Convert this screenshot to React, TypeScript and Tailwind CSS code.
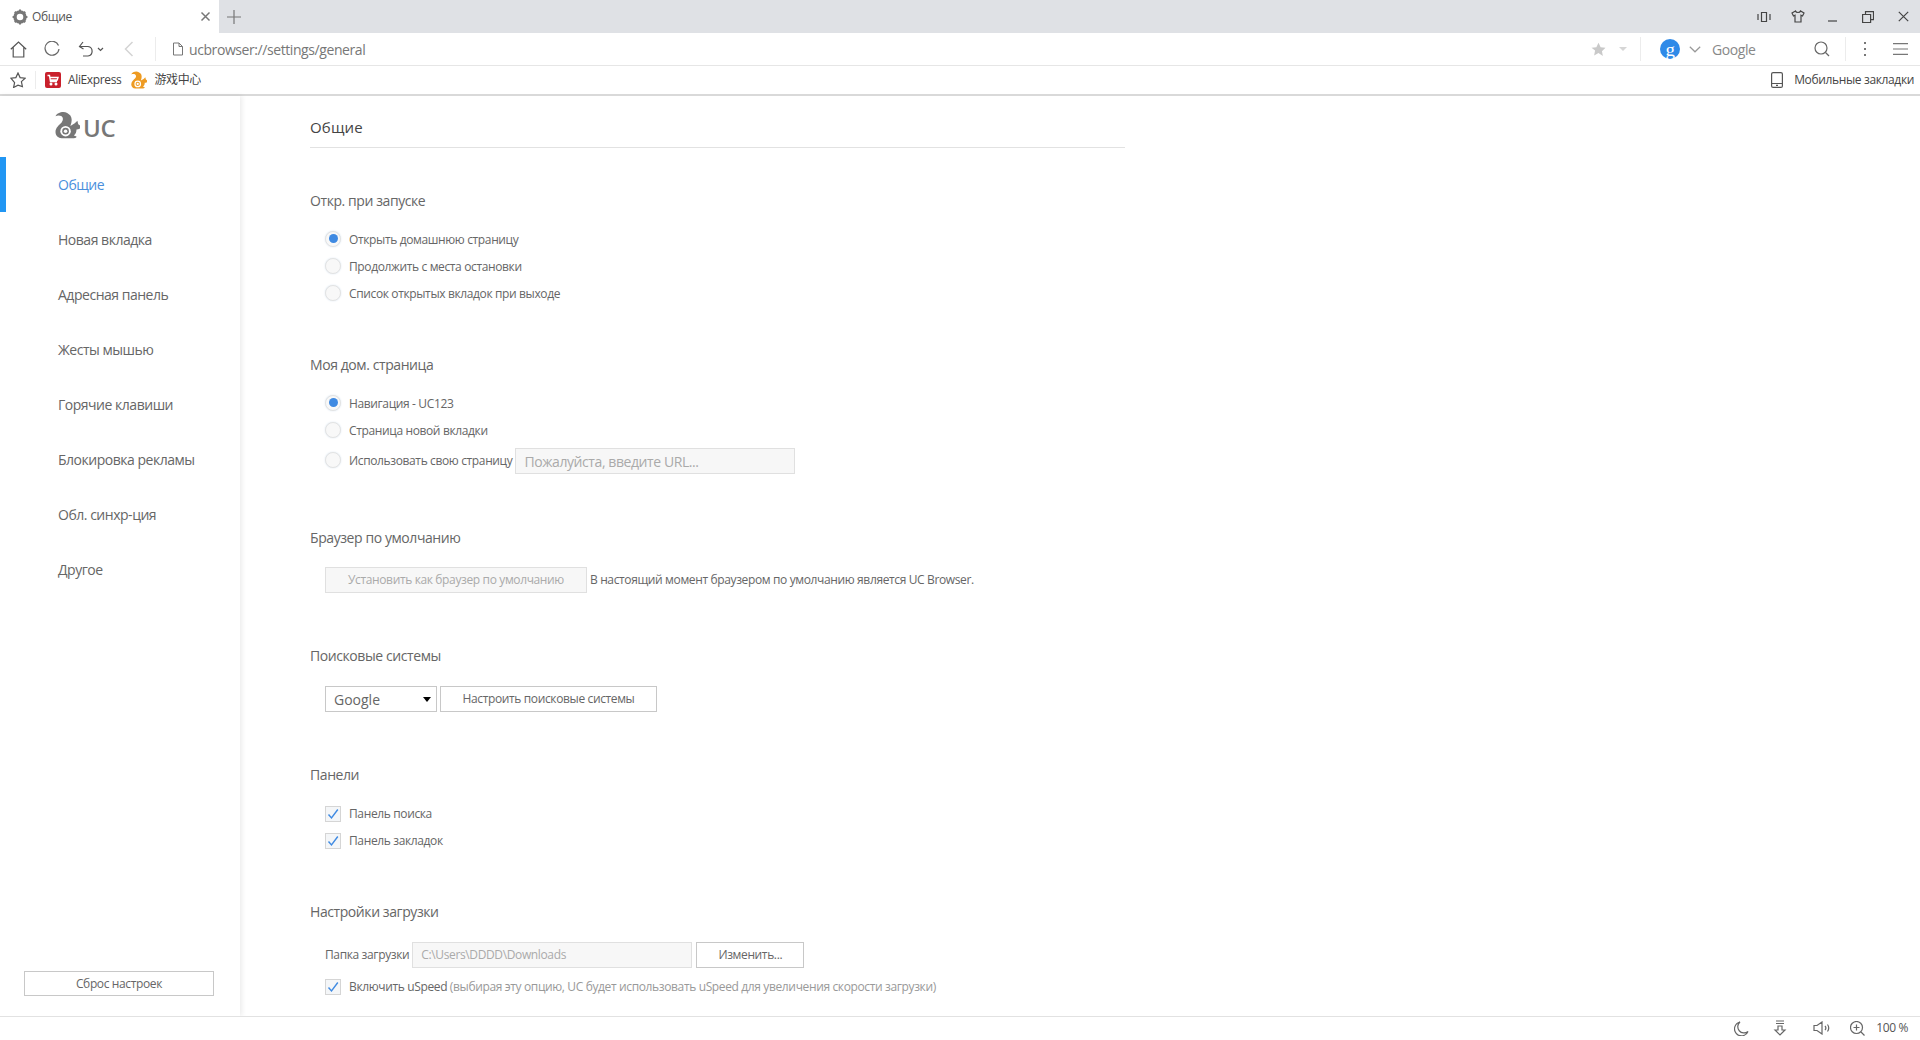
import type { ReactNode } from 'react';

const font = "font-['Open_Sans','Noto_Sans_CJK_SC',sans-serif] tracking-[-0.023em]";

const navItems = [
  'Общие',
  'Новая вкладка',
  'Адресная панель',
  'Жесты мышью',
  'Горячие клавиши',
  'Блокировка рекламы',
  'Обл. синхр-ция',
  'Другое',
];

function Icon({ w, h = w, children, className = '' }: { w: number; h?: number; children: ReactNode; className?: string }) {
  return (
    <svg
      width={w}
      height={h}
      viewBox={`0 0 ${w} ${h}`}
      fill="none"
      stroke="currentColor"
      strokeWidth="1.2"
      className={`shrink-0 ${className}`}
    >
      {children}
    </svg>
  );
}

function Squirrel({ size, className = '' }: { size: number; className?: string }) {
  return (
    <svg width={size} height={size} viewBox="0 0 32 32" className={`shrink-0 ${className}`} fill="currentColor">
      <path d="M13 1c-4 0-8 2-9 5 2-1 5-1 7 0 2 2 2 4 0 7-3 3-7 6-7 11 0 4 3 7 7 7h14c2 0 3-1 3-2l-3-1c2-2 3-4 3-7 2 0 5-1 6-3l-4-3-1-4-3 3-5 3c2-5 2-9 0-12-2-2-5-4-8-4z" />
      <circle cx="15.5" cy="23" r="6" fill="#fff" />
      <circle cx="15.5" cy="23" r="3.8" />
      <circle cx="15.5" cy="23" r="2" fill="#fff" />
    </svg>
  );
}

function Radio({ on = false }: { on?: boolean }) {
  return (
    <span className="mb-[2px] flex h-4 w-4 shrink-0 items-center justify-center rounded-full border border-[#e3e3e3] bg-[#f8f8f8] shadow-[0_0_2px_#dbe6f0]">
      {on && <span className="h-[9px] w-[9px] rounded-full bg-[#3f8ae2]" />}
    </span>
  );
}

function Check() {
  return (
    <span className="flex h-4 w-4 shrink-0 items-center justify-center border border-[#d5d5d5] bg-[#f4f6f8]">
      <svg width="12" height="12" viewBox="0 0 12 12" fill="none" stroke="#3f8ae2" strokeWidth="1.4">
        <path d="M1.5 6.5 4.5 10 10.8 1.5" />
      </svg>
    </span>
  );
}

function Option({ on, label }: { on?: boolean; label: string }) {
  return (
    <div className="flex h-[27px] items-center pl-[15px] text-[12px] text-[#666]">
      <Radio on={on} />
      <span className="ml-[8px]">{label}</span>
    </div>
  );
}

function CheckRow({ children }: { children: ReactNode }) {
  return (
    <div className="flex h-[27px] items-center pl-[15px] text-[12px] text-[#666]">
      <Check />
      <span className="ml-[8px]">{children}</span>
    </div>
  );
}

function Title({ children, className = '' }: { children: ReactNode; className?: string }) {
  return <div className={`h-5 text-[14px] leading-5 tracking-[-0.03em] text-[#666] ${className}`}>{children}</div>;
}

export default function App() {
  return (
    <div className={`flex h-[1040px] w-[1920px] flex-col overflow-hidden bg-white ${font}`}>
      {/* tab strip */}
      <div className="flex h-[33px] items-center bg-[#dfe1e5]">
        <div className="flex h-full w-[219px] items-center bg-white pl-[12px] pr-[8px]">
          <svg width="16" height="16" viewBox="0 0 16 16" className="shrink-0 text-[#777]">
            <circle cx="8" cy="8" r="5" fill="none" stroke="currentColor" strokeWidth="3.4" />
            <path d="M8 .6v2M8 13.400v2M.6 8h2M13.400 8h2M2.800 2.800l1.400 1.400M11.800 11.800l1.400 1.400M13.200 2.800l-1.400 1.400M4.200 11.800l-1.400 1.400" stroke="currentColor" strokeWidth="2" />
          </svg>
          <span className="ml-[4px] flex-1 text-[12px] text-[#555]">Общие</span>
          <Icon w={11} className="text-[#777]">
            <path d="M1.5 1.5l8 8M9.5 1.5l-8 8" strokeWidth="1.5" />
          </Icon>
        </div>
        <Icon w={14} className="ml-[8px] text-[#777]">
          <path d="M7 0v14M0 7h14" />
        </Icon>
        <div className="flex-1" />
        <div className="flex items-center pr-[11px] text-[#444]">
          <Icon w={14} h={12}>
            <path d="M4.5 1.5h5v9h-5zM1 3v6M13 3v6" />
          </Icon>
          <Icon w={14} h={13} className="ml-[20px]">
            <path d="M4.5 1 1 3l1.5 3 1.5-.7V12h6V5.300l1.500.7L13 3 9.500 1c-.5 2-4.500 2-5 0z" />
          </Icon>
          <Icon w={11} h={10} className="ml-[22px]">
            <path d="M1 9h9" />
          </Icon>
          <Icon w={12} className="ml-[24px]">
            <path d="M.6 3.500h8v8h-8zM3.500 3.500V.6h8v8H8.600" />
          </Icon>
          <Icon w={11} className="ml-[24px]">
            <path d="M.8.8l9.400 9.400M10.200.8.800 10.200" />
          </Icon>
        </div>
      </div>

      {/* address bar */}
      <div className="flex h-[33px] items-center border-b border-[#e6e6e6] bg-white text-[#555]">
        <Icon w={17} className="ml-[10px]">
          <path d="M.8 8.200 8.500 1l7.700 7.200M3.200 6.500v9.500h10.600V6.500" />
        </Icon>
        <Icon w={16} className="ml-[17px] text-[#666]">
          <path d="M14.500 4.500A7 7 0 1 0 15 8" />
        </Icon>
        <Icon w={16} h={16} className="ml-[18px]">
          <path d="M1.500 5.500H10a4.800 4.800 0 0 1 0 9.500H5M5 1 1.500 5.500 5.500 8" />
        </Icon>
        <Icon w={7} h={5} className="ml-[3px]">
          <path d="M1 1l2.500 2.500L6 1" />
        </Icon>
        <Icon w={10} h={16} className="ml-[20px] text-[#d4d4d4]">
          <path d="M8.500 1 1.500 8l7 7" strokeWidth="1.500" />
        </Icon>
        <div className="ml-[21px] h-[24px] w-px bg-[#ececec]" />
        <Icon w={12} h={14} className="ml-[16px] text-[#777]">
          <path d="M1.500 1h5.500l3.500 3.500v8.500h-9zM7 1v3.500h3.500" strokeWidth="1" />
        </Icon>
        <span className="ml-[5px] text-[14px] tracking-[-0.03em] text-[#777]">ucbrowser://settings/general</span>
        <div className="flex-1" />
        <svg width="15" height="15" viewBox="0 0 24 24" fill="#c9c9c9" className="shrink-0">
          <path d="M12 1l3.400 7.200 7.800 1-5.700 5.400 1.500 7.800L12 17.600l-7 3.800 1.500-7.800L.8 9.200l7.800-1z" />
        </svg>
        <span className="ml-[13px] h-0 w-0 border-x-[4.500px] border-t-[4px] border-x-transparent border-t-[#d6d6d6]" />
        <div className="ml-[13px] h-[24px] w-px bg-[#ececec]" />
        <span className="ml-[19px] flex h-[20px] w-[20px] items-center justify-center rounded-full bg-[#2f8ae8] font-['Liberation_Serif',serif] text-[19px] leading-none text-white">
          g
        </span>
        <Icon w={12} h={7} className="ml-[9px] text-[#999]">
          <path d="M.8.800 6 5.800 11.200.800" />
        </Icon>
        <span className="ml-[11px] w-[102px] text-[14px] tracking-[-0.03em] text-[#888]">Google</span>
        <Icon w={16} className="text-[#666]">
          <circle cx="7" cy="7" r="6" />
          <path d="M11.500 11.500 15 15" />
        </Icon>
        <div className="ml-[15px] h-[24px] w-px bg-[#ececec]" />
        <div className="ml-[18px] flex w-[3px] flex-col gap-[4px]">
          <span className="h-[2px] w-[2px] bg-[#777]" />
          <span className="h-[2px] w-[2px] bg-[#777]" />
          <span className="h-[2px] w-[2px] bg-[#777]" />
        </div>
        <Icon w={15} h={12} className="ml-[26px] mr-[12px] text-[#777]">
          <path d="M0 .6h15M0 6h15M0 11.400h15" />
        </Icon>
      </div>

      {/* bookmarks */}
      <div className="flex h-[30px] items-center border-b-2 border-[#d9d9d9] bg-white text-[12px] tracking-[-0.03em] text-[#444]">
        <Icon w={16} className="ml-[10px] text-[#555]">
          <path d="M8 1l2.100 4.600 5 .6-3.700 3.400 1 4.900L8 13.100 3.600 15.500l1-4.900L.9 6.200l5-.6z" />
        </Icon>
        <div className="ml-[9px] h-[18px] w-px bg-[#ececec]" />
        <span className="ml-[9px] flex h-4 w-4 items-center justify-center rounded-[2px] bg-[#c9202c]">
          <svg width="12" height="12" viewBox="0 0 12 12" fill="none" stroke="#fff" strokeWidth="1.400">
            <path d="M.5 1.500h2l1 6h6.500M2.800 3.500h8.200l-.8 2.500H3.200" />
            <circle cx="4" cy="10" r=".8" fill="#fff" />
            <circle cx="9" cy="10" r=".8" fill="#fff" />
          </svg>
        </span>
        <span className="ml-[7px]">AliExpress</span>
        <Squirrel size={18} className="ml-[8px] text-[#ee9b22]" />
        <span className="ml-[7px]">游戏中心</span>
        <div className="flex-1" />
        <Icon w={12} h={16} className="text-[#555]">
          <rect x=".6" y=".6" width="10.800" height="14.800" rx="1.500" />
          <path d="M.6 11.500h10.800M5 13.400h2" />
        </Icon>
        <span className="ml-[11px] mr-[6px] font-medium">Мобильные закладки</span>
      </div>

      <div className="flex min-h-0 flex-1">
        {/* sidebar */}
        <aside className="flex w-[240px] shrink-0 flex-col bg-white shadow-[2px_0_5px_rgba(0,0,0,0.08)]">
          <div className="flex h-[61px] items-center pb-[3px] pl-[52px] text-[#777]">
            <Squirrel size={28} />
            <span className="ml-[3px] mt-[5px] text-[24px] font-semibold leading-none">UC</span>
          </div>
          <nav className="flex flex-col tracking-[-0.03em]">
            {navItems.map((item, i) => (
              <div
                key={item}
                className={`flex h-[55px] items-center border-l-[6px] pl-[52px] text-[14px] ${
                  i === 0 ? 'border-[#2196f3] text-[#4a8fdc]' : 'border-transparent text-[#666]'
                }`}
              >
                {item}
              </div>
            ))}
          </nav>
          <div className="flex-1" />
          <button className="mb-[20px] ml-[24px] mr-[26px] h-[25px] border border-[#c8c8c8] text-[12px] text-[#666]">Сброс настроек</button>
        </aside>

        {/* settings */}
        <main className="min-w-0 flex-1 pl-[70px]">
          <div className="w-[815px] border-b border-[#e2e2e2] pb-[8px] pt-[19px] text-[15px] font-medium leading-6 tracking-[0.01em] text-[#444]">Общие</div>

          <Title className="mt-[43px]">Откр. при запуске</Title>
          <div className="mt-[15px]">
            <Option on label="Открыть домашнюю страницу" />
            <Option label="Продолжить с места остановки" />
            <Option label="Список открытых вкладок при выходе" />
          </div>

          <Title className="mt-[48px]">Моя дом. страница</Title>
          <div className="mt-[15px]">
            <Option on label="Навигация - UC123" />
            <Option label="Страница новой вкладки" />
            <div className="mt-[4px] flex h-[26px] items-center pl-[15px] text-[12px] text-[#666]">
              <Radio />
              <span className="ml-[8px]">Использовать свою страницу</span>
              <div className="ml-[3px] flex h-full w-[280px] items-center border border-[#e0e0e0] bg-[#f7f7f7] pl-[8px] text-[14px] tracking-[-0.03em] text-[#aaa]">
                Пожалуйста, введите URL...
              </div>
            </div>
          </div>

          <Title className="mt-[54px]">Браузер по умолчанию</Title>
          <div className="mt-[19px] flex h-[26px] items-center pl-[15px] text-[12px] text-[#666]">
            <button className="h-full w-[262px] border border-[#e0e0e0] bg-[#f7f7f7] text-[#aaa]">Установить как браузер по умолчанию</button>
            <span className="ml-[3px]">В настоящий момент браузером по умолчанию является UC Browser.</span>
          </div>

          <Title className="mt-[53px]">Поисковые системы</Title>
          <div className="mt-[20px] flex h-[26px] items-center pl-[15px]">
            <div className="flex h-full w-[112px] items-center justify-between border border-[#c8c8c8] pl-[8px] pr-[5px] text-[14px] tracking-normal text-[#666]">
              Google
              <span className="h-0 w-0 border-x-[4.500px] border-t-[5px] border-x-transparent border-t-black" />
            </div>
            <button className="ml-[3px] h-full w-[217px] border border-[#c8c8c8] text-[12px] text-[#666]">Настроить поисковые системы</button>
          </div>

          <Title className="mt-[53px]">Панели</Title>
          <div className="mt-[15px]">
            <CheckRow>Панель поиска</CheckRow>
            <CheckRow>Панель закладок</CheckRow>
          </div>

          <Title className="mt-[48px]">Настройки загрузки</Title>
          <div className="mt-[20px] flex h-[26px] items-center pl-[15px] text-[12px] text-[#666]">
            <span>Папка загрузки</span>
            <div className="ml-[3px] flex h-full w-[280px] items-center border border-[#e0e0e0] bg-[#f7f7f7] pl-[8px] text-[#aaa]">C:\Users\DDDD\Downloads</div>
            <button className="ml-[4px] h-full w-[108px] border border-[#c8c8c8]">Изменить...</button>
          </div>
          <div className="mt-[5px]">
            <CheckRow>
              Включить uSpeed <span className="text-[#999]">(выбирая эту опцию, UC будет использовать uSpeed для увеличения скорости загрузки)</span>
            </CheckRow>
          </div>
        </main>
      </div>

      {/* status bar */}
      <div className="flex h-[24px] items-center justify-end border-t border-[#e2e2e2] bg-white pb-px text-[#666]">
        <Icon w={15}>
          <path d="M6 1A7 7 0 1 0 14 10.500 6 6 0 0 1 6 1z" />
        </Icon>
        <Icon w={14} h={16} className="ml-[24px]">
          <path d="M3 1h8M3 3.500h8M5 6h4v4h3l-5 5-5-5h3z" />
        </Icon>
        <Icon w={18} h={14} className="ml-[26px]">
          <path d="M1 4.500h3L9 1v12L4 9.500H1zM12 5a3 3 0 0 1 0 4M14.500 3.500a6 6 0 0 1 0 7" />
        </Icon>
        <Icon w={15} className="ml-[19px]">
          <circle cx="6.500" cy="6.500" r="6" />
          <path d="M6.500 3.500v6M3.500 6.500h6M11 11l3.500 3.500" />
        </Icon>
        <span className="ml-[11px] mr-[12px] text-[12px] text-[#555]">100 %</span>
      </div>
    </div>
  );
}
